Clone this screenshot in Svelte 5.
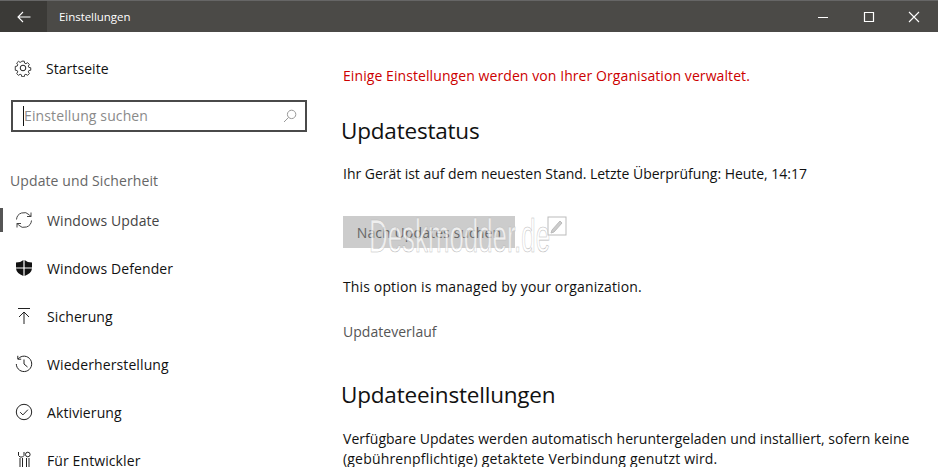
<script>
	const navItems = [
		{ id: 'update', label: 'Windows Update', active: true },
		{ id: 'defender', label: 'Windows Defender' },
		{ id: 'backup', label: 'Sicherung' },
		{ id: 'restore', label: 'Wiederherstellung' },
		{ id: 'activate', label: 'Aktivierung' },
		{ id: 'dev', label: 'Für Entwickler' }
	];
</script>

<div class="window">
	<header class="titlebar">
		<button class="back" aria-label="Zurück">
			<svg width="14" height="12" viewBox="0 0 14 12" fill="none" stroke="#fff" stroke-width="1.1">
				<path d="M1 6h12.500M6 1 1 6l5 5" />
			</svg>
		</button>
		<span class="title">Einstellungen</span>
		<div class="controls">
			<svg width="46" height="32" viewBox="0 0 46 32" fill="none" stroke="#fff"><path d="M18 16.500h10" /></svg>
			<svg width="46" height="32" viewBox="0 0 46 32" fill="none" stroke="#fff" stroke-width="1.2"><path d="M18.500 11.500h9v9h-9z" /></svg>
			<svg width="46" height="32" viewBox="0 0 46 32" fill="none" stroke="#fff" stroke-width="1.1"><path d="M17 11l10 10M27 11 17 21" /></svg>
		</div>
	</header>

	<div class="body">
		<aside class="sidebar">
			<div class="home">
				<svg class="icon" width="18" height="18" viewBox="0 0 18 18" fill="none" stroke="#222" stroke-width="1">
					<circle cx="9" cy="9" r="2.800" />
					<path d="M7.600 1.200h2.800l.4 2.200 1.500.7 1.900-1.200 2 2-1.200 1.900.6 1.500 2.200.4v2.800l-2.200.4-.6 1.500 1.200 1.900-2 2-1.900-1.200-1.500.6-.4 2.200H7.600l-.4-2.200-1.500-.6-1.900 1.200-2-2 1.200-1.900-.6-1.500-2.200-.4V7.200l2.200-.4.6-1.500-1.200-1.900 2-2 1.900 1.200 1.500-.7z" transform="translate(1.100 1.100) scale(.88)" />
				</svg>
				<span>Startseite</span>
			</div>

			<div class="search">
				<span class="caret"></span>
				<span class="placeholder">Einstellung suchen</span>
				<svg width="14" height="14" viewBox="0 0 14 14" fill="none" stroke="#999" stroke-width="1">
					<circle cx="8.600" cy="5.400" r="4.200" />
					<path d="M5.600 8.400 1 13" />
				</svg>
			</div>

			<div class="section">Update und Sicherheit</div>

			<nav>
				{#each navItems as item (item.id)}
					<div class="nav-item" class:active={item.active}>
						<span class="icon-box">
							{#if item.id === 'update'}
								<svg width="18" height="18" viewBox="0 0 18 18" fill="none" stroke="#444" stroke-width="1">
									<path d="M1.500 8.500a7.500 7.500 0 0 1 13-4.500L16 5.500M16 1.500v4h-4M16.500 9.500a7.500 7.500 0 0 1-13 4.500L2 12.500M2 16.500v-4h4" />
								</svg>
							{:else if item.id === 'defender'}
								<svg width="18" height="18" viewBox="0 0 18 18" fill="#111">
									<path d="M1 3.500c3 0 5.500-.8 7.400-2.500v7.400H1zM9.600 1c1.900 1.700 4.400 2.500 7.400 2.500v4.900H9.600zM1 9.600h7.400V17C4 15.500 1.400 13 1 9.600zM9.600 9.600H17c-.4 3.400-3 5.900-7.400 7.400z" />
								</svg>
							{:else if item.id === 'backup'}
								<svg width="18" height="18" viewBox="0 0 18 18" fill="none" stroke="#222" stroke-width="1">
									<path d="M3 1.500h12M9 17V5M4 10l5-5 5 5" />
								</svg>
							{:else if item.id === 'restore'}
								<svg width="18" height="18" viewBox="0 0 18 18" fill="none" stroke="#222" stroke-width="1">
									<path d="M3.200 3.800A7.700 7.700 0 1 1 1.300 9M2.800 .8v3.400h3.400M9 4.500V9l3.500 3" />
								</svg>
							{:else if item.id === 'activate'}
								<svg width="18" height="18" viewBox="0 0 18 18" fill="none" stroke="#222" stroke-width="1">
									<circle cx="9" cy="9" r="7.700" />
									<path d="m5.200 9.200 2.700 2.700 5-5.200" />
								</svg>
							{:else}
								<svg width="18" height="18" viewBox="0 0 18 18" fill="none" stroke="#222" stroke-width="1">
									<path d="M5 7v10M7.500 7v10M3.500 1v3.500L5 6h2.500L9 4.500V1M11.500 7v10M14 7v10" />
									<circle cx="12.800" cy="3.500" r="2.300" />
								</svg>
							{/if}
						</span>
						<span class="nav-label">{item.label}</span>
					</div>
				{/each}
			</nav>
		</aside>

		<main class="content">
			<p class="notice">Einige Einstellungen werden von Ihrer Organisation verwaltet.</p>
			<h2>Updatestatus</h2>
			<p class="status">Ihr Gerät ist auf dem neuesten Stand. Letzte Überprüfung: Heute, 14:17</p>
			<button class="check" disabled>Nach Updates suchen</button>
			<p class="managed">This option is managed by your organization.</p>
			<div class="history">Updateverlauf</div>
			<h2 class="second">Updateeinstellungen</h2>
			<p class="auto">Verfügbare Updates werden automatisch heruntergeladen und installiert, sofern keine<br /><span class="auto-rest">(gebührenpflichtige) getaktete Verbindung genutzt wird.</span></p>
		</main>
	</div>

	<div class="watermark">
		<span>Deskmodder.de</span>
		<svg width="20" height="20" viewBox="0 0 20 20" fill="#fff" stroke="#bbb" stroke-width="1">
			<rect x="1" y="1" width="18" height="18" />
			<path d="m5 14 8-9 2 2-8 9-3 1z" fill="#ccc" />
		</svg>
	</div>
</div>

<style>
	:global(body) {
		background: #fff;
	}

	.window {
		position: relative;
		width: 938px;
		height: 467px;
		overflow: hidden;
		font-family: 'Open Sans', 'Noto Sans', sans-serif;
		color: #111;
		background: #fff;
	}

	.titlebar {
		height: 32px;
		display: flex;
		align-items: center;
		background: #4b4a47;
		border-top: 1px solid #666;
		box-sizing: border-box;
		color: #fff;
	}

	.back {
		width: 47px;
		height: 31px;
		border: 0;
		padding: 0;
		background: #3b3a37;
		display: flex;
		align-items: center;
		justify-content: center;
	}

	.title {
		margin-left: 12px;
		font-size: 11.500px;
		letter-spacing: -0.05px;
	}

	.controls {
		margin-left: auto;
		display: flex;
	}

	.body {
		display: flex;
	}

	.sidebar {
		width: 343px;
		flex: none;
		font-size: 14px;
		letter-spacing: 0.05px;
	}

	.home {
		display: flex;
		align-items: center;
		gap: 14px;
		padding: 26px 0 0 14px;
		height: 20px;
	}

	.search {
		margin: 22px 0 0 11px;
		width: 296px;
		height: 32px;
		box-sizing: border-box;
		border: 2px solid #4a4a4a;
		display: flex;
		align-items: center;
		padding: 0 8px 0 10px;
	}

	.caret {
		width: 1px;
		height: 20px;
		background: #111;
	}

	.placeholder {
		color: #8a8a8a;
		flex: 1;
		line-height: 20px;
		margin-top: -1px;
		letter-spacing: 0.12px;
	}

	.section {
		margin: 39px 0 0 10px;
		color: #666;
		height: 20px;
		line-height: 20px;
		letter-spacing: 0.1px;
	}

	nav {
		margin-top: 5px;
	}

	.nav-item {
		height: 48px;
		display: flex;
		align-items: center;
		gap: 14px;
		padding-left: 15px;
		box-sizing: border-box;
	}

	.nav-label {
		letter-spacing: 0.1px;
	}

	.nav-item.active {
		color: #444;
		position: relative;
	}

	.nav-item.active::before {
		content: '';
		position: absolute;
		left: 0;
		top: 12px;
		width: 3px;
		height: 24px;
		background: #555;
	}

	.icon-box {
		display: flex;
		width: 18px;
		height: 18px;
	}

	.content {
		flex: 1;
		font-size: 14px;
		letter-spacing: 0.03px;
	}

	p {
		margin: 0;
		line-height: 20px;
	}

	.notice {
		margin-top: 34px;
		color: #c00;
		letter-spacing: 0.08px;
	}

	h2 {
		margin: 0;
		font-weight: 400;
		font-size: 22.500px;
		line-height: 30px;
		margin-left: -2px;
		letter-spacing: -0.2px;
	}

	.notice + h2 {
		margin-top: 30px;
	}

	.status {
		margin-top: 18px;
		letter-spacing: -0.03px;
	}

	.check {
		display: block;
		margin-top: 32px;
		width: 172px;
		height: 32px;
		border: 0;
		background: #ccc;
		color: #666;
		font: inherit;
		letter-spacing: 0.1px;
	}

	.managed {
		margin-top: 29px;
		letter-spacing: 0.14px;
	}

	.history {
		margin-top: 25px;
		line-height: 20px;
		color: #555;
	}

	.second {
		margin-top: 38px;
	}

	.auto {
		margin-top: 19px;
	}

	.auto-rest {
		letter-spacing: 0.18px;
	}

	.watermark {
		position: absolute;
		left: 369px;
		top: 213px;
		width: 200px;
		height: 46px;
	}

	.watermark span {
		position: absolute;
		left: 0;
		top: 0;
		font-family: 'Liberation Sans', sans-serif;
		font-size: 47px;
		line-height: 46px;
		white-space: nowrap;
		color: rgba(255, 255, 255, 0.7);
		-webkit-text-stroke: 0.6px #bbb;
		transform: scaleX(0.55);
		transform-origin: left top;
	}

	.watermark svg {
		position: absolute;
		left: 178px;
		top: 3px;
	}
</style>
